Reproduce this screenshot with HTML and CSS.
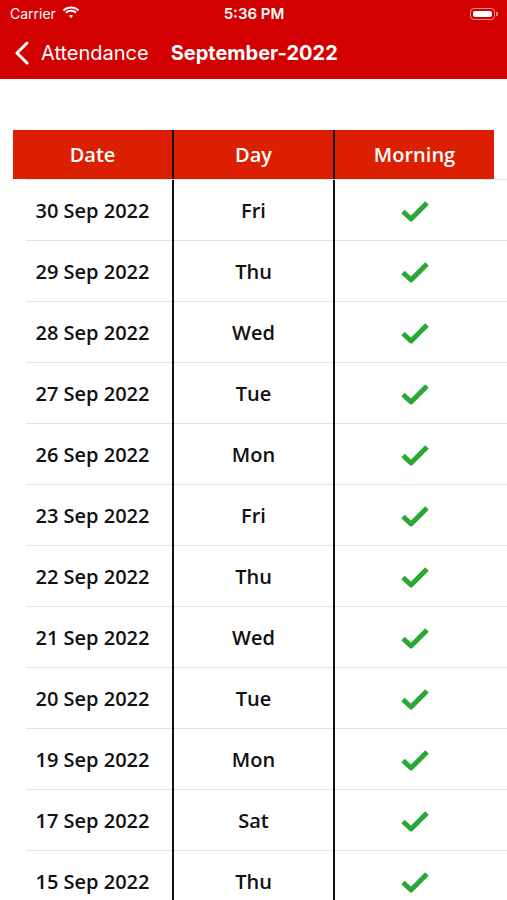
FILE: index.html
```html
<!DOCTYPE html>
<html lang="en">
<head>
  <meta charset="UTF-8">
  <meta name="viewport" content="width=device-width, initial-scale=1.0">
  <title>Attendance - September-2022</title>
  <link rel="stylesheet" href="styles.css">
</head>
<body>
  <header class="app-header">
    <!-- 状态栏 -->
    <div class="status-bar">
      <div class="carrier">
        Carrier
        <svg class="wifi" width="18" height="13" viewBox="0 0 17 12">
          <path d="M8.5 2.2c2.5 0 4.8 1 6.5 2.6l1.3-1.3C14.2 1.4 11.5.3 8.5.3S2.8 1.4.7 3.5L2 4.8c1.7-1.6 4-2.6 6.5-2.6z" fill="#fff"/>
          <path d="M8.5 5.3c1.6 0 3 .6 4.1 1.6l1.3-1.3C12.5 4.2 10.6 3.4 8.5 3.4S4.5 4.2 3.1 5.6l1.3 1.3c1.1-1 2.5-1.6 4.1-1.6z" fill="#fff"/>
          <path d="M8.5 8.3c.8 0 1.4.3 1.9.7l-1.9 2.4-1.9-2.4c.5-.4 1.1-.7 1.9-.7z" fill="#fff"/>
        </svg>
      </div>
      <div class="clock">5:36 PM</div>
      <div class="battery">
        <span class="battery-body"><span class="battery-level"></span></span>
        <span class="battery-cap"></span>
      </div>
    </div>

    <!-- 导航栏 -->
    <nav class="nav-bar">
      <a class="back-link" href="#">
        <svg class="chevron" width="16" height="24" viewBox="0 0 16 24">
          <polyline points="13,2 3,12 13,22" fill="none" stroke="#fff" stroke-width="3" stroke-linecap="round" stroke-linejoin="round"/>
        </svg>
        <span>Attendance</span>
      </a>
      <h1 class="nav-title">September-2022</h1>
    </nav>
  </header>

  <main class="sheet">
    <div class="row row-head">
      <div class="cell">Date</div>
      <div class="cell">Day</div>
      <div class="cell">Morning</div>
    </div>
    <div id="rows"></div>
  </main>

  <script>
    (function() {
      var days = [
        ['30 Sep 2022', 'Fri'],
        ['29 Sep 2022', 'Thu'],
        ['28 Sep 2022', 'Wed'],
        ['27 Sep 2022', 'Tue'],
        ['26 Sep 2022', 'Mon'],
        ['23 Sep 2022', 'Fri'],
        ['22 Sep 2022', 'Thu'],
        ['21 Sep 2022', 'Wed'],
        ['20 Sep 2022', 'Tue'],
        ['19 Sep 2022', 'Mon'],
        ['17 Sep 2022', 'Sat'],
        ['15 Sep 2022', 'Thu']
      ];
      var check = '<svg class="check" width="30" height="22" viewBox="0 0 30 22">' +
        '<polyline points="3,11.5 11,19 27,3" fill="none" stroke="#2aa836" stroke-width="5" stroke-linejoin="round"/></svg>';
      var html = '';
      days.forEach(function(d) {
        html += '<div class="row">' +
          '<div class="cell">' + d[0] + '</div>' +
          '<div class="cell">' + d[1] + '</div>' +
          '<div class="cell">' + check + '</div>' +
          '</div>';
      });
      document.getElementById('rows').innerHTML = html;
    })();
  </script>
</body>
</html>
```

FILE: styles.css
```css
*,
*::before,
*::after {
  box-sizing: border-box;
}
body {
  margin: 0;
  height: 900px;
  overflow: hidden;
  background-color: #fff;
  font-family: Inter, "Liberation Sans", Arial, sans-serif;
}

/* 顶部红色区域 */
.app-header {
  background-color: #d20000;
  color: #fff;
  height: 79px;
}
.status-bar {
  display: grid;
  grid-template-columns: 1fr auto 1fr;
  align-items: center;
  height: 27px;
  padding: 0 9px 0 10px;
}
.carrier {
  display: flex;
  align-items: center;
  gap: 6px;
  font-size: 14px;
}
.wifi {
  margin-top: -3px;
}
.clock {
  font-size: 15px;
  font-weight: 600;
}
.battery {
  justify-self: end;
  display: flex;
  align-items: center;
}
.battery-body {
  display: block;
  width: 25px;
  height: 12px;
  padding: 2px;
  border: 1px solid rgba(255, 255, 255, 0.55);
  border-radius: 4px;
}
.battery-level {
  display: block;
  height: 100%;
  background-color: #fff;
  border-radius: 2px;
}
.battery-cap {
  display: block;
  width: 2px;
  height: 4px;
  margin-left: 1px;
  background-color: rgba(255, 255, 255, 0.55);
  border-radius: 0 1px 1px 0;
}

.nav-bar {
  display: flex;
  align-items: center;
  height: 52px;
  padding-left: 14px;
  gap: 22px;
}
.back-link {
  display: flex;
  align-items: center;
  gap: 11px;
  color: #fff;
  text-decoration: none;
  font-size: 20px;
}
.nav-title {
  margin: 0;
  font-size: 20px;
  font-weight: 700;
}

/* 表格部分 */
.sheet {
  padding-top: 51px;
  font-family: "Open Sans", "Noto Sans", sans-serif;
  font-weight: 600;
  font-size: 20px;
  color: #111;
}
.row {
  display: grid;
  grid-template-columns: 159px 161px 161px;
  padding-left: 13px;
  height: 61px;
  background-image: linear-gradient(#e4e4e4, #e4e4e4);
  background-repeat: no-repeat;
  background-size: calc(100% - 26px) 1px;
  background-position: right bottom;
}
.row-head {
  height: 50px;
}
.cell {
  display: flex;
  align-items: center;
  justify-content: center;
}
.cell + .cell {
  border-left: 2px solid #111;
}
.row-head .cell {
  background-color: #dc1f00;
  color: #fff;
  height: 49px;
}
.check {
  display: block;
}
```
